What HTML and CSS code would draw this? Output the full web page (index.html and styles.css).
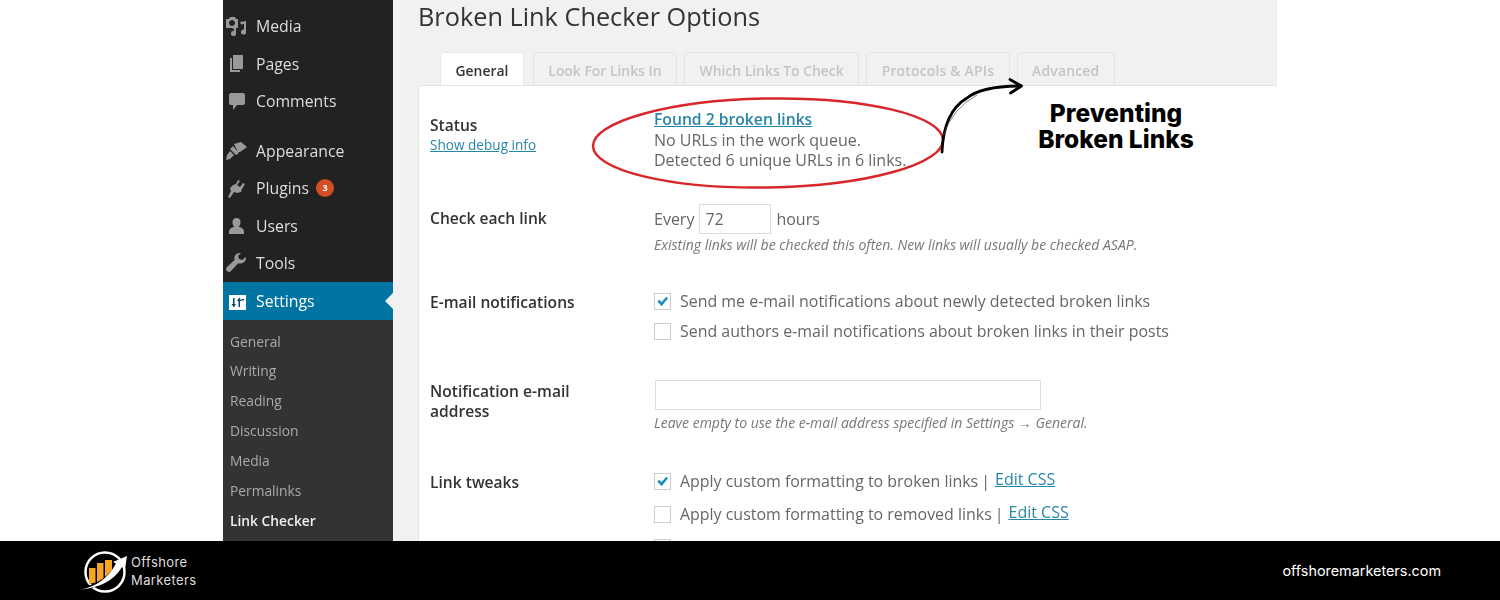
FILE: index.html
```html
<!DOCTYPE html>
<html lang="en">
<head>
  <meta charset="UTF-8">
  <title>Preventing Broken Links</title>
  <link rel="stylesheet" href="styles.css">
</head>
<body>
  <div class="page">
    <div class="shot">
      <aside class="sidebar">
        <ul class="menu">
          <li><svg class="icon" viewBox="0 0 22 22"><path d="M1 4h3l1-2h5l1 2h2v9H1zM7 5a3 3 0 1 0 .01 0zM15 7l6-1v11a2.500 2.500 0 1 1-2-2.400V9l-3 .5zM7 13.500l4-.5v5.500a2.500 2.500 0 1 1-2-2.400V14.500z" fill-rule="evenodd"/></svg>Media</li>
          <li><svg class="icon" viewBox="0 0 22 22"><path d="M8 2h10v14H8zM5 5h2v12h8v2H5z"/></svg>Pages</li>
          <li class="gap-after"><svg class="icon" viewBox="0 0 22 22"><path d="M6 3h12a2 2 0 0 1 2 2v8a2 2 0 0 1-2 2h-6l-4 5v-5H6a2 2 0 0 1-2-2V5a2 2 0 0 1 2-2z"/></svg>Comments</li>
          <li><svg class="icon" viewBox="0 0 22 22"><path d="M9 4l7-2 6 5-7 5-2 0zM8 6l6 7-3 2-6-6zM5 11l4 4-4 4-4 1 1-5z"/></svg>Appearance</li>
          <li><svg class="icon" viewBox="0 0 22 22"><path d="M13 3l2 1-3 4 3 2 3-4 2 1-3 5-1 3-4 1-3-1-4 6-2-1 3-6-1-3 3-3 3-1z"/></svg>Plugins <span class="badge">3</span></li>
          <li><svg class="icon" viewBox="0 0 22 22"><path d="M11.500 3a4 4 0 0 1 4 4.500c0 1.800-.8 3.200-1.800 4.200 3.300 1 5.300 2.300 5.300 4.800V19H4v-2.500c0-2.500 2-3.800 5.300-4.800-1-1-1.800-2.400-1.800-4.200A4 4 0 0 1 11.500 3z"/></svg>Users</li>
          <li><svg class="icon" viewBox="0 0 22 22"><path d="M21 5l-4 3-3-1-1-3 3-3c-3-.5-6 1-6.500 4-.2 1 0 2 .3 2.800L2 15a2.800 2.800 0 0 0 4 4l7.200-7.800c3 1 6.300-.4 7.500-3.200.3-1 .4-2 .3-3z"/></svg>Tools</li>
          <li class="current"><svg class="icon" viewBox="0 0 22 22"><path fill="#fff" d="M4 5h17v15H4z"/><path fill="#0b4a66" d="M8 8h1.500v6H11l-2.250 3.500L6.500 14H8zM15 17h-1.500v-6H12l2.250-3.500L16.500 11H15zM16.500 9h2.500v1.500h-2.500z"/></svg>Settings</li>
        </ul>
        <ul class="submenu">
          <li>General</li>
          <li>Writing</li>
          <li>Reading</li>
          <li>Discussion</li>
          <li>Media</li>
          <li>Permalinks</li>
          <li class="active">Link Checker</li>
        </ul>
      </aside>

      <main class="content">
        <h1>Broken Link Checker Options</h1>
        <nav class="tabs">
          <span class="tab tab-on">General</span>
          <span class="tab">Look For Links In</span>
          <span class="tab">Which Links To Check</span>
          <span class="tab tab-loose">Protocols &amp; APIs</span>
          <span class="tab tab-loose">Advanced</span>
        </nav>
        <section class="panel">
          <div class="row row-status">
            <div class="label">Status<a class="debug" href="#">Show debug info</a></div>
            <div class="field">
              <a class="found" href="#">Found 2 broken links</a>
              <div>No URLs in the work queue.</div>
              <div>Detected 6 unique URLs in 6 links.</div>
            </div>
          </div>
          <div class="row row-check">
            <div class="label">Check each link</div>
            <div class="field">
              <div class="every">Every <span class="input input-hours">72</span> hours</div>
              <p class="hint">Existing links will be checked this often. New links will usually be checked ASAP.</p>
            </div>
          </div>
          <div class="row row-mail">
            <div class="label">E-mail notifications</div>
            <div class="field">
              <div class="check"><span class="box on"><svg viewBox="0 0 16 16"><path d="M2.500 8l2-2 2.500 2.500L12 3l2 1.500-7 8.500z"/></svg></span>Send me e-mail notifications about newly detected broken links</div>
              <div class="check check-next"><span class="box"></span>Send authors e-mail notifications about broken links in their posts</div>
            </div>
          </div>
          <div class="row row-address">
            <div class="label">Notification e-mail address</div>
            <div class="field">
              <span class="input input-mail"></span>
              <p class="hint">Leave empty to use the e-mail address specified in Settings → General.</p>
            </div>
          </div>
          <div class="row row-tweaks">
            <div class="label">Link tweaks</div>
            <div class="field">
              <div class="check"><span class="box on"><svg viewBox="0 0 16 16"><path d="M2.500 8l2-2 2.500 2.500L12 3l2 1.500-7 8.500z"/></svg></span>Apply custom formatting to broken links<span class="sep">|</span><a href="#">Edit CSS</a></div>
              <div class="check check-tweak"><span class="box"></span>Apply custom formatting to removed links<span class="sep">|</span><a href="#">Edit CSS</a></div>
              <div class="check check-tweak"><span class="box"></span></div>
            </div>
          </div>
        </section>
      </main>

      <svg class="ring" viewBox="0 0 360 100"><ellipse cx="180" cy="50" rx="175" ry="44.500" transform="rotate(-1 180 50)"/></svg>
      <svg class="arrow" viewBox="0 0 90 80"><path class="thick" d="M2 75C3 50 10 31 27 21 37 13 55 9 81 9"/><path class="thin" d="M3.500 58Q12 32 37 18"/><path class="thick" d="M70 2.500L81.500 9 70.500 16"/></svg>
      <div class="note">Preventing<br>Broken Links</div>
    </div>

    <footer class="footer">
      <div class="brand">
        <svg class="logo" viewBox="0 0 48 44">
          <circle cx="24" cy="23" r="19.500" fill="none" stroke="#fff" stroke-width="2.500"/>
          <path fill="#f5a623" d="M8 19h6.500v14.500L8 35zM16 14h6.500v17l-6.500 2.500zM24 11h7v13l-7 6z"/>
          <path fill="none" stroke="#000" stroke-width="3.500" d="M1 40c16-3 28-11 36-25"/>
          <path fill="#fff" d="M0 40.500c15-3 27-11 35-26l-3-1.500 14-6-2 13-3-2C33 32 17 39 0 40.500z"/>
        </svg>
        <div class="brand-name">Offshore<br>Marketers</div>
      </div>
      <div class="site">offshoremarketers.com</div>
    </footer>
  </div>
</body>
</html>
```

FILE: styles.css
```css
html, body {
  margin: 0;
  padding: 0;
}

body {
  background: #fff;
  font-family: "Open Sans", sans-serif;
  color: #555;
}

a {
  color: #2a86a8;
}

.page {
  width: 1500px;
  height: 600px;
  overflow: hidden;
  display: flex;
  flex-direction: column;
}

.shot {
  position: relative;
  height: 541px;
  margin: 0 223px;
  display: flex;
  overflow: hidden;
}

/* sidebar */
.sidebar {
  width: 170px;
  flex: none;
  background: #222;
  color: #eee;
  filter: blur(0.35px);
}

.menu,
.submenu {
  list-style: none;
  margin: 0;
  padding: 0;
}

.menu {
  padding-top: 7.500px;
}

.menu li {
  height: 37.500px;
  display: flex;
  align-items: center;
  font-size: 15.800px;
  color: #ddd;
}

.menu li.gap-after {
  margin-bottom: 12px;
}

.menu .icon {
  width: 22px;
  height: 22px;
  margin: 0 9px 0 2px;
  flex: none;
  fill: #999;
}

.badge {
  width: 18px;
  height: 18px;
  margin-left: 7px;
  border-radius: 50%;
  background: #d54e21;
  color: #fff;
  font-size: 9px;
  font-weight: 700;
  line-height: 18px;
  text-align: center;
}

.menu li.current {
  position: relative;
  background: #0074a2;
  color: #fff;
}

.menu li.current::after {
  content: "";
  position: absolute;
  right: 0;
  top: 11px;
  border: 8px solid transparent;
  border-right-color: #f1f1f1;
  border-left-width: 0;
}

.submenu {
  background: #333;
  padding-top: 7px;
  height: 220px;
}

.submenu li {
  height: 29.900px;
  padding-left: 7px;
  font-size: 13.800px;
  line-height: 29px;
  color: #aaa;
}

.submenu li.active {
  color: #eee;
  font-weight: 600;
}

/* main column */
.content {
  flex: 1;
  background: #f1f1f1;
  padding-left: 25px;
  filter: blur(0.35px);
}

h1 {
  margin: 0;
  height: 52px;
  font-size: 25.300px;
  font-weight: 400;
  line-height: 33px;
  color: #333;
}

.tabs {
  display: flex;
  gap: 7px;
  height: 33px;
  padding-left: 22px;
}

.tab {
  height: 33px;
  box-sizing: border-box;
  padding: 0 14.500px;
  border: 1px solid #e4e4e4;
  border-bottom: none;
  border-radius: 5px 5px 0 0;
  font-size: 13.900px;
  font-weight: 600;
  line-height: 36px;
  color: #c4c4c4;
}

.tab-loose {
  letter-spacing: 0.200px;
}

.tab-on {
  background: #fff;
  color: #333;
  border-color: #e9e9e9;
  margin-right: 2px;
}

.panel {
  background: #fff;
  border-top: 1px solid #e4e4e4;
  border-left: 1px solid #e4e4e4;
  border-top-left-radius: 4px;
  height: 460px;
  padding-left: 11px;
}

.row {
  display: grid;
  grid-template-columns: 224px 1fr;
  box-sizing: border-box;
}

.label {
  max-width: 170px;
  font-size: 15.600px;
  font-weight: 600;
  line-height: 20px;
  color: #333;
}

.debug {
  display: block;
  font-size: 13.600px;
  font-weight: 400;
  line-height: 20px;
}

.field {
  font-size: 16px;
  line-height: 20.500px;
  color: #666;
}

.row-status {
  padding-top: 23px;
  height: 118px;
}

.row-status .label {
  padding-top: 6px;
}

.found {
  display: block;
  font-size: 15.700px;
  font-weight: 600;
}

.row-check {
  height: 84px;
}

.row-check .label {
  padding-top: 4px;
}

.every {
  display: flex;
  align-items: center;
  height: 30px;
  gap: 5px;
}

.input {
  display: block;
  box-sizing: border-box;
  background: #fff;
  border: 1px solid #ddd;
}

.input-hours {
  width: 72px;
  height: 30px;
  padding-left: 5px;
  line-height: 28px;
}

.hint {
  margin: 2px 0 0;
  font-size: 14px;
  font-style: italic;
  line-height: 18px;
  color: #777;
}

.row-mail {
  height: 92px;
}

.row-mail .label {
  padding-top: 4px;
}

.check {
  display: flex;
  align-items: center;
  height: 20px;
  margin-top: 3px;
  font-size: 15.950px;
  white-space: pre;
}

.check-next {
  margin-top: 10px;
}

.check-tweak {
  margin-top: 13px;
}

.box {
  width: 17px;
  height: 17px;
  box-sizing: border-box;
  margin-right: 9px;
  border: 1px solid #ccc;
  background: #fff;
  flex: none;
}

.box svg {
  display: block;
  width: 15px;
  height: 15px;
  fill: #1e8cbe;
}

.sep {
  margin: 0 5px 0 3px;
}

.check a {
  position: relative;
  top: -2px;
  font-size: 16px;
}

.row-address {
  height: 88px;
}

.row-address .label {
  padding-top: 1px;
}

.input-mail {
  width: 386px;
  height: 30px;
  margin-left: 1px;
}

.row-address .hint {
  margin-top: 4px;
}

.row-tweaks .label {
  padding-top: 4px;
}

/* annotation laid over the screenshot */
.ring {
  position: absolute;
  left: 364.500px;
  top: 93px;
  width: 360px;
  height: 100px;
}

.ring ellipse {
  fill: none;
  stroke: #d9262b;
  stroke-width: 2.500;
}

.arrow {
  position: absolute;
  left: 717px;
  top: 77px;
  width: 90px;
  height: 80px;
  fill: none;
}

.arrow .thick {
  fill: none;
  stroke: #000;
  stroke-width: 2.800;
  stroke-linecap: round;
  stroke-linejoin: round;
}

.arrow .thin {
  fill: none;
  stroke: #555;
  stroke-width: 0.700;
}

.note {
  position: absolute;
  left: 793px;
  top: 101px;
  width: 200px;
  font-family: Inter, sans-serif;
  font-size: 24.500px;
  font-weight: 800;
  line-height: 25.500px;
  color: #000;
  text-align: center;
}

/* footer */
.footer {
  flex: 1;
  background: #000;
  display: flex;
  align-items: center;
  justify-content: space-between;
  padding: 0 59px 0 81px;
  color: #fff;
}

.brand {
  display: flex;
  align-items: center;
}

.logo {
  width: 48px;
  height: 44px;
  margin-right: 2px;
}

.brand-name {
  font-family: Inter, sans-serif;
  font-size: 13px;
  letter-spacing: 0.400px;
  line-height: 18px;
  color: #ddd;
}

.site {
  margin-bottom: 1px;
  font-family: Inter, sans-serif;
  font-size: 14.400px;
}
```
